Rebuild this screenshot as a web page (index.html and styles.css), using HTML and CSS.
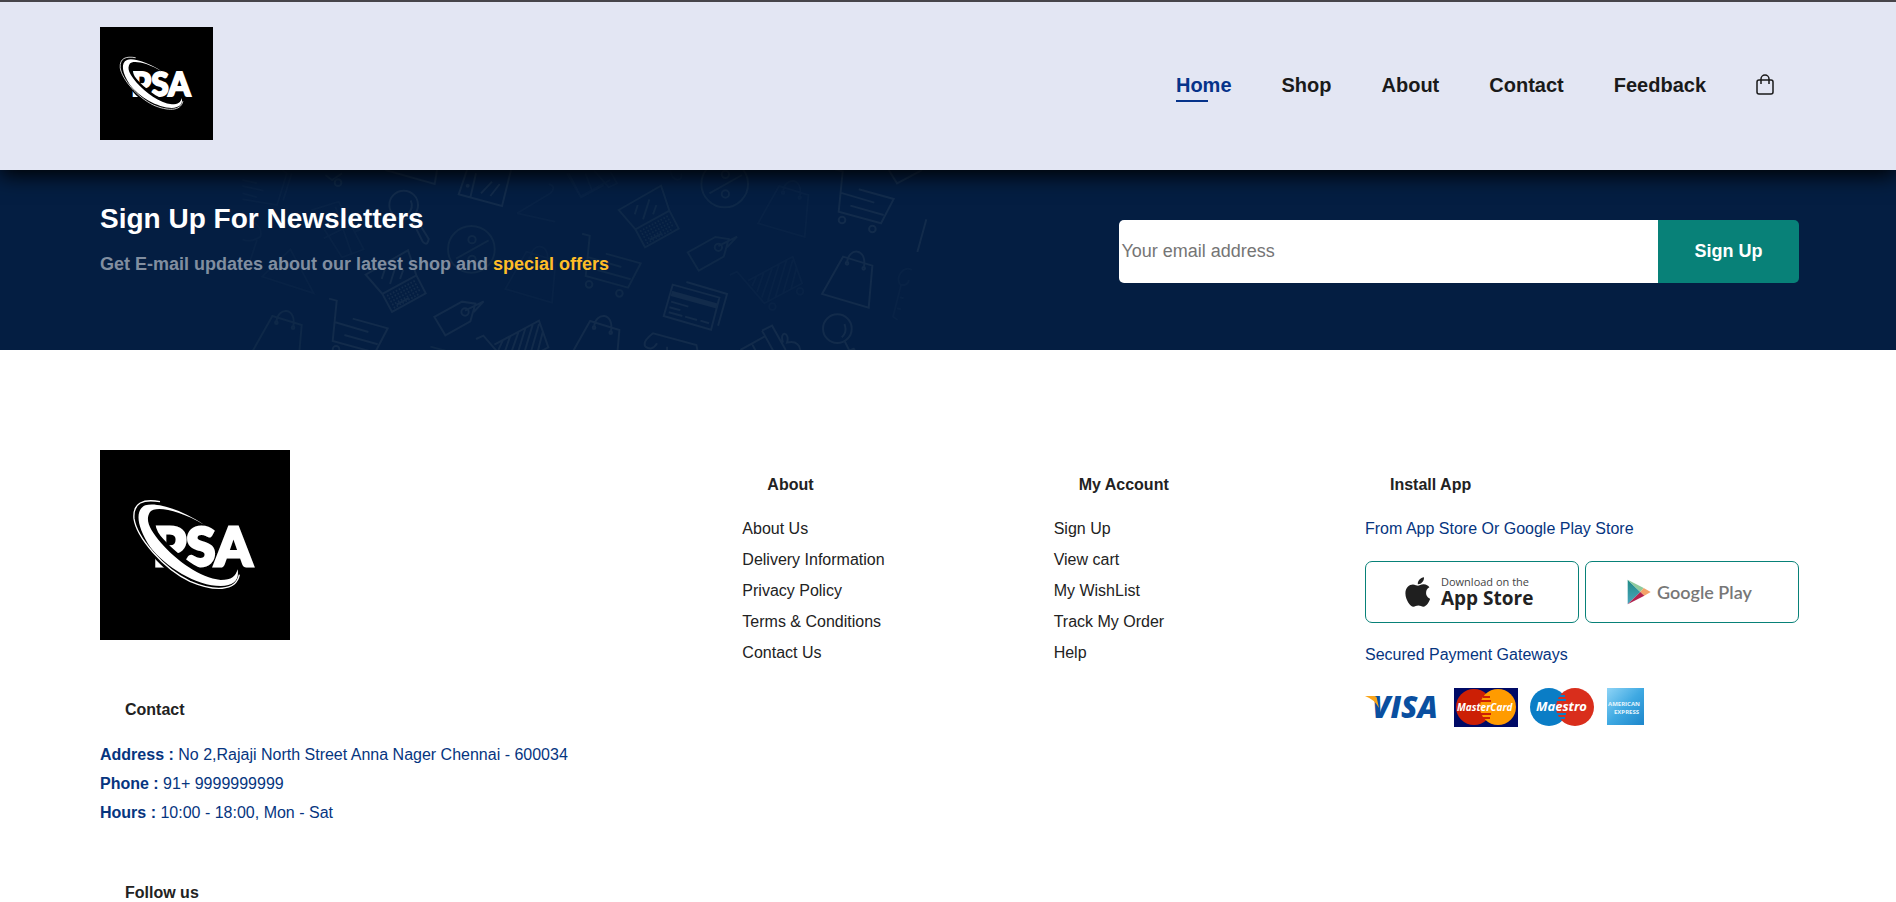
FILE: index.html
```
<!DOCTYPE html>
<html lang="en">
<head>
<meta charset="utf-8">
<meta name="viewport" content="width=device-width, initial-scale=1">
<title>PSA Store</title>
<link rel="stylesheet" href="styles.css">
</head>
<body>
<svg class="defs" aria-hidden="true">
  <symbol id="logo" viewBox="0 0 570 570">
    <rect width="570" height="570" fill="#000"/>
    <text class="logo-word" x="158" y="349">PSA</text>
    <path fill="#000" d="M312 228C240 172 150 142 118 158C88 178 110 252 160 320C220 394 320 428 380 420C414 412 424 380 412 350C408 372 398 376 366 376C306 372 226 310 182 258C160 232 160 190 176 180C210 172 262 196 312 228Z"/>
    <path fill="#fff" d="M312 224C250 182 170 154 136 166C104 180 110 228 150 290C195 350 290 408 362 408C402 406 418 390 413 358C406 380 396 390 362 390C300 384 230 332 184 280C150 240 134 212 150 186C164 166 236 178 312 224Z"/>
    <path fill="none" stroke="#fff" stroke-width="4" d="M180 155C130 146 98 158 102 206C110 262 190 356 270 394C340 424 408 426 418 374"/>
  </symbol>
</svg>

<header class="header">
  <a class="brand" href="#" aria-label="PSA home"><svg class="brand-logo" aria-hidden="true"><use href="#logo"/></svg></a>
  <nav class="nav" aria-label="Main">
    <a class="nav-link active" href="#">Home</a>
    <a class="nav-link" href="#">Shop</a>
    <a class="nav-link" href="#">About</a>
    <a class="nav-link" href="#">Contact</a>
    <a class="nav-link" href="#">Feedback</a>
    <a class="nav-link" href="#" aria-label="Cart">
      <svg class="bag-icon" viewBox="0 0 18 22" aria-hidden="true"><rect x="1" y="6" width="16" height="14" rx="2"/><path d="M5 10V5a4 4 0 0 1 8 0v5"/></svg>
    </a>
  </nav>
</header>

<main>
<section class="newsletter">
  <svg class="pattern" viewBox="0 0 688 180" aria-hidden="true">
    <defs>
      <g id="p-cart"><path d="M824 28L847 34L835 155L962 190L1000 117L895 88M840 98L942 128M870 137L970 165"/><circle cx="845" cy="180" r="10"/><circle cx="936" cy="207" r="10"/></g>
      <g id="p-bag"><path d="M848 290L785 402L925 443L936 317ZM860 310C862 260 924 262 910 325"/><circle cx="860" cy="310" r="4"/><circle cx="910" cy="325" r="4"/></g>
      <g id="p-laptop"><path d="M175 150L302 77L327 152L225 208ZM225 208L327 152L355 206L254 262ZM232 135L223 163M267 118L248 178M288 135L278 163M268 240L305 220"/><path stroke-dasharray="5 5" d="M239 214L325 167M244 223L330 176M249 232L335 185M254 241L340 194M259 250L338 206"/></g>
      <g id="p-percent"><circle cx="493" cy="72" r="70"/><circle cx="495" cy="43" r="11"/><circle cx="495" cy="102" r="11"/><path d="M447 100L545 45"/></g>
      <g id="p-tag"><path d="M382 277L465 231L505 237L490 290L415 332ZM474 258L530 230L500 262"/><circle cx="474" cy="262" r="11"/></g>
      <g id="p-trolley"><path d="M508 345L530 335L612 430L725 370L697 290L563 362M575 378L588 350M590 396L610 338M604 413L635 325M622 423L656 313M645 412L678 302M668 400L697 300M692 387L708 325"/><circle cx="636" cy="440" r="10"/><circle cx="719" cy="394" r="10"/></g>
      <g id="p-glass"><circle cx="831" cy="506" r="43"/><path d="M852 492Q862 515 844 532M853 544L866 570M866 572L888 616Q902 632 906 608L880 566Z"/></g>
      <g id="p-gift"><path d="M540 570L612 530M575 552L590 580M605 512L635 497L676 570M605 512L640 575M668 548C655 510 690 515 680 548C710 540 720 560 720 572"/></g>
    </defs>
    <g class="lines" transform="translate(-151 -10) scale(.3333)">
      <use href="#p-cart" x="-108" y="388"/>
      <use href="#p-laptop" x="651" y="194"/>
      <use href="#p-tag" x="650" y="194"/>
      <use href="#p-trolley" x="649" y="192"/>
      <use href="#p-glass" x="109" y="-371"/>
      <path d="M885 30L1033 72L1040 30M1130 30L1105 103L1235 138L1262 30M1157 40L1140 112M1205 65L1172 100M1228 72L1200 108"/>
      <circle cx="1132" cy="77" r="3"/>
      <g class="soft">
        <use href="#p-percent" x="650" y="196"/>
        <use href="#p-bag" x="-302" y="178"/>
        <path d="M705 45L725 60L755 40"/><circle cx="743" cy="68" r="10"/>
        <path d="M1020 560L1075 575M1025 580"/>
      </g>
      <g class="faint">
        <use href="#p-bag" x="460" y="-15"/>
        <path d="M456 60L500 70M456 78L520 92M456 100L500 112M456 118L560 135L590 38M578 122L604 40M575 30L590 40M456 190C480 170 520 200 510 230C480 250 460 240 456 238M500 240L480 300M515 350L600 268L670 400Z"/>
        <path d="M665 150L745 125L820 268L755 292ZM700 235L790 190M735 140L785 285M790 215Q840 205 815 180M1280 160L1380 100Q1400 80 1375 72M1280 160L1395 185M1430 40L1470 110L1560 60"/>
      </g>
    </g>
    <g class="lines" transform="translate(319 -10) scale(.3333)">
      <use href="#p-bag"/>
      <use href="#p-cart"/>
      <use href="#p-glass"/>
      <use href="#p-gift"/>
      <use href="#p-bag" x="-759" y="193"/>
      <path d="M337 374L477 413L452 509L310 468ZM378 366L500 402L473 497M332 425L384 440M327 442L360 451M325 457L366 468M374 470L410 480M420 482L446 490M985 30L1010 70L1085 30M255 560Q245 545 278 520L408 555L412 575M255 560Q275 575 290 550M320 575V560M1098 178L1071 276"/>
      <path class="band" d="M333 400L470 438"/>
      <g class="soft">
        <use href="#p-laptop"/>
        <use href="#p-cart" x="-759" y="193"/>
        <use href="#p-tag"/>
        <use href="#p-percent"/>
      </g>
      <g class="faint">
        <use href="#p-trolley"/>
        <use href="#p-bag" x="-192" y="-212"/>
        <path d="M25 40L62 112L130 75M75 40L95 92M100 30L145 82L170 70L150 35M330 30C335 70 370 65 362 40M1055 330C1030 315 1005 350 1018 372C1030 380 1045 372 1045 360M1022 375L998 470L1012 480M1018 412L1030 415M1010 445L1022 448"/>
      </g>
    </g>
  </svg>
  <div class="newsletter-text">
    <h2 class="newsletter-title">Sign Up For Newsletters</h2>
    <p class="newsletter-sub">Get E-mail updates about our latest shop and <span class="offer">special offers</span></p>
  </div>
  <form class="signup">
    <input class="signup-input" type="email" placeholder="Your email address" aria-label="Your email address">
    <button class="signup-button" type="button">Sign Up</button>
  </form>
</section>
</main>

<footer class="footer">
  <div class="contact">
    <svg class="footer-logo" role="img" aria-label="PSA"><use href="#logo"/></svg>
    <section class="block">
      <h3 class="heading">Contact</h3>
      <div class="details">
        <p><strong>Address :</strong> No 2,Rajaji North Street Anna Nager Chennai - 600034</p>
        <p><strong>Phone :</strong> 91+ 9999999999</p>
        <p><strong>Hours :</strong> 10:00 - 18:00, Mon - Sat</p>
      </div>
    </section>
    <section class="block">
      <h3 class="heading">Follow us</h3>
    </section>
  </div>
  <section class="col">
    <h3 class="heading">About</h3>
    <ul class="links">
      <li><a href="#">About Us</a></li>
      <li><a href="#">Delivery Information</a></li>
      <li><a href="#">Privacy Policy</a></li>
      <li><a href="#">Terms &amp; Conditions</a></li>
      <li><a href="#">Contact Us</a></li>
    </ul>
  </section>
  <section class="col">
    <h3 class="heading">My Account</h3>
    <ul class="links">
      <li><a href="#">Sign Up</a></li>
      <li><a href="#">View cart</a></li>
      <li><a href="#">My WishList</a></li>
      <li><a href="#">Track My Order</a></li>
      <li><a href="#">Help</a></li>
    </ul>
  </section>
  <section class="col install">
    <h3 class="heading">Install App</h3>
    <p>From App Store Or Google Play Store</p>
    <div class="stores">
      <a class="store" href="#">
        <svg class="apple" viewBox="0 28 376 456" aria-hidden="true"><path d="M318.7 268.7c-.2-36.7 16.4-64.4 50-84.8-18.8-26.9-47.2-41.7-84.7-44.6-35.5-2.8-74.3 20.7-88.5 20.7-15 0-49.4-19.7-76.4-19.7C63.3 141.2 4 184.8 4 273.5q0 39.3 14.4 81.2c12.8 36.7 59 126.7 107.2 125.2 25.2-.6 43-17.9 75.8-17.9 31.8 0 48.3 17.9 76.4 17.9 48.6-.7 90.4-82.5 102.6-119.3-65.2-30.7-61.7-90-61.7-91.9zm-56.6-164.2c27.3-32.4 24.8-61.9 24-72.5-24.1 1.4-52 16.4-67.9 34.9-17.5 19.8-27.8 44.3-25.6 71.9 26.1 2 49.9-11.4 69.5-34.3z"/></svg>
        <span class="store-text"><span class="store-small">Download on the</span><span class="store-name">App Store</span></span>
      </a>
      <a class="store" href="#">
        <svg class="play" viewBox="0 0 72 78" aria-hidden="true">
          <defs><linearGradient id="teal" x1="0" y1="0" x2="0" y2="1"><stop offset="0" stop-color="#1f8a86"/><stop offset="1" stop-color="#4aa5bd"/></linearGradient></defs>
          <path fill="url(#teal)" d="M2 2L40 39L2 76Z"/>
          <path fill="#8fca9c" d="M2 2L50 27L40 39Z"/>
          <path fill="#f3a268" d="M50 27L71 39L52 50L40 39Z"/>
          <path fill="#b3234e" d="M2 76L40 39L52 50Z"/>
        </svg>
        <span class="play-name">Google Play</span>
      </a>
    </div>
    <p>Secured Payment Gateways</p>
    <svg class="payments" viewBox="0 0 280 40" role="img" aria-label="Visa, MasterCard, Maestro, American Express">
      <defs>
        <linearGradient id="amex" x1="0" y1="0" x2="1" y2="1"><stop offset="0" stop-color="#8fd4f6"/><stop offset=".5" stop-color="#3fa9e2"/><stop offset="1" stop-color="#1d86cb"/></linearGradient>
      </defs>
      <text class="visa" x="7" y="31">VISA</text>
      <path fill="#f9a51a" d="M0 9H9Q12 9 12 12L14 21Q9 12 0 9Z"/>
      <rect x="89" y="1" width="64" height="39" fill="#000a66"/>
      <circle cx="109" cy="20" r="18" fill="#cc1f05"/>
      <circle cx="133" cy="20" r="18" fill="#ff9b00"/>
      <path stroke="#cc1f05" stroke-width="2" d="M118 10H125M116 14H126M116 27H126M118 31H125"/>
      <text class="mc" x="92" y="24">MasterCard</text>
      <circle cx="184" cy="20" r="19" fill="#0a7dc6"/>
      <circle cx="210" cy="20" r="19" fill="#d92e1c"/>
      <path stroke="#0a7dc6" stroke-width="2" d="M194 9H200M192 13H201M192 27H201M194 31H200"/>
      <text class="maestro" x="171" y="24">Maestro</text>
      <rect x="242" y="1" width="37" height="37" fill="url(#amex)"/>
      <text class="amex" x="243" y="19">AMERICAN</text>
      <text class="amex" x="249" y="27">EXPRESS</text>
    </svg>
  </section>
</footer>
</body>
</html>
```

FILE: styles.css
```
* { box-sizing: border-box; margin: 0; padding: 0; }

:root {
  --left: 100px;
  --right: 97px;
  --blue: #06357f;
  --teal: #088178;
}

body {
  background: #fff;
  color: var(--blue);
  font: 16px/20px "Liberation Sans", Arial, sans-serif;
}

a { color: inherit; text-decoration: none; }
.defs { position: absolute; width: 0; height: 0; }
.logo-word { font: 900 160px Lato, sans-serif; fill: #fff; stroke: #fff; stroke-width: 9px; }

.header {
  position: relative;
  z-index: 1;
  display: flex;
  justify-content: space-between;
  align-items: center;
  padding: 25px var(--right) 27px var(--left);
  border-top: 2px solid #47454a;
  background: #e3e6f3;
  box-shadow: 0 5px 20px #000;
}
.brand-logo { display: block; width: 113px; height: 113px; margin-bottom: 3px; }
.nav { display: flex; align-items: center; }
.nav-link {
  position: relative;
  margin: 0 25px;
  color: #1a1a1a;
  font-size: 20px;
  font-weight: 600;
  line-height: 24px;
}
.nav-link.active { color: #06338a; }
.nav-link.active::after {
  content: "";
  position: absolute;
  left: 0;
  bottom: -5px;
  width: 32px;
  height: 2px;
  background: #06338a;
}
.bag-icon { display: block; width: 18px; height: 22px; fill: none; stroke: #1a1a1a; stroke-width: 1.5; }

.newsletter {
  position: relative;
  display: flex;
  justify-content: space-between;
  align-items: flex-start;
  padding: 33px var(--right) 67px var(--left);
  background: #041e42;
  overflow: hidden;
}
.pattern {
  position: absolute;
  top: 0;
  left: 20%;
  width: 688px;
  height: 180px;
  transform: translateX(-20%);
}
.lines { fill: none; stroke: #122b4b; stroke-width: 6; }
.lines .soft { stroke: #0e2848; }
.lines .faint { stroke: #082245; }
.lines .band { stroke-width: 16; }
.newsletter-text { position: relative; }
.newsletter-title { color: #fff; font-size: 28px; line-height: 32px; }
.newsletter-sub { margin-top: 19px; color: #818ea0; font-size: 18px; font-weight: 600; }
.offer { color: #ffbd27; }
.signup { position: relative; display: flex; width: 40%; height: 63px; margin-top: 17px; }
.signup-input {
  flex: 1;
  min-width: 0;
  padding: 0 2px;
  border: 0;
  border-radius: 5px 0 0 5px;
  background: #fff;
  font: 18px "Liberation Sans", Arial, sans-serif;
}
.signup-input::placeholder { color: #757575; }
.signup-button {
  width: 141px;
  border: 0;
  border-radius: 0 5px 5px 0;
  background: var(--teal);
  color: #fff;
  font: 600 18px "Liberation Sans", Arial, sans-serif;
}

.footer {
  display: flex;
  justify-content: space-between;
  align-items: flex-start;
  padding: 100px var(--right) 60px var(--left);
}
.contact { min-width: 475px; }
.footer-logo { display: block; width: 190px; height: 190px; margin-bottom: 1px; }
.block { margin-top: 60px; }
.heading { padding: 0 25px 2px; color: #222; font-size: 16px; }
.details { display: flex; flex-direction: column; gap: 9px; margin-top: 23px; }
.col { display: flex; flex-direction: column; gap: 22px; min-width: 144px; padding-top: 25px; }
.install { min-width: 434px; }
.links { display: flex; flex-direction: column; gap: 11px; list-style: none; color: #222; }
.stores { display: flex; gap: 6px; }
.store {
  flex: 1;
  display: flex;
  align-items: center;
  height: 62px;
  padding-left: 39px;
  border: 1px solid var(--teal);
  border-radius: 7px;
}
.apple { width: 25px; height: 30px; margin-right: 11px; fill: #1f1f1f; }
.store-text { display: flex; flex-direction: column; color: #222; font-family: "Open Sans", sans-serif; }
.store-small { color: #444; font-size: 11px; line-height: 12px; }
.store-name { font-size: 19px; font-weight: 700; line-height: 20px; }
.play { width: 24px; height: 26px; margin: 0 6px 0 2px; }
.play-name { color: #777; font: 600 18px/24px Lato, sans-serif; }
.payments { width: 280px; height: 40px; }
.visa { font: italic 800 30px "Open Sans", sans-serif; fill: #0a4fa0; }
.mc { font: italic 700 10px "Open Sans", sans-serif; fill: #fff; }
.maestro { font: italic 700 13px "Open Sans", sans-serif; fill: #fff; }
.amex { font: 700 6px "Open Sans", sans-serif; fill: #e6f5fd; }
```
